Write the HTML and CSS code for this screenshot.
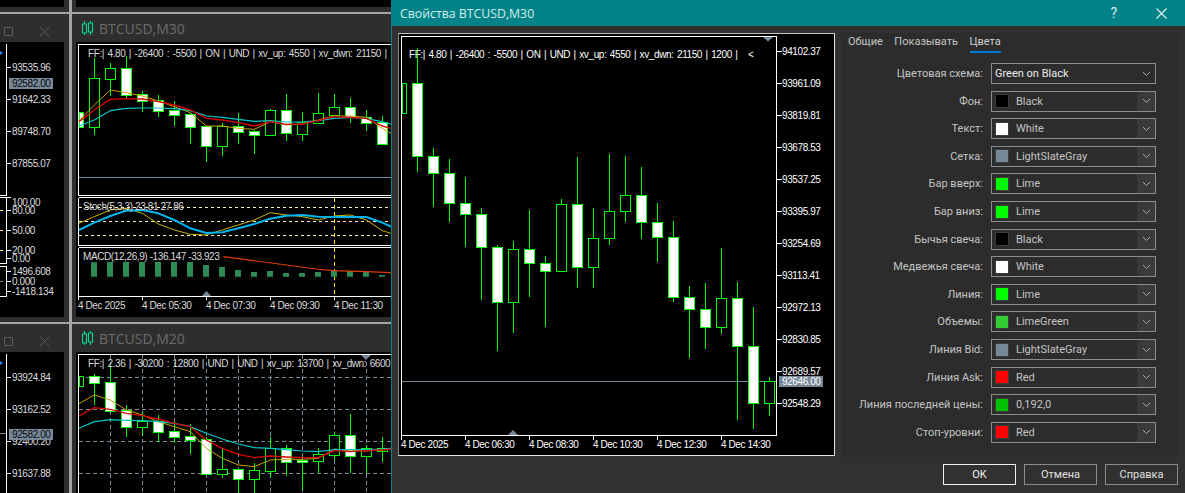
FILE: index.html
```html
<!DOCTYPE html>
<html lang="ru">
<head>
<meta charset="utf-8">
<title>Свойства BTCUSD,M30</title>
<link rel="stylesheet" href="styles.css">
</head>
<body>
<div class="desktop">
  <section class="win win-left win-top"><div class="strip"></div></section>
  <section class="win win-right win-top"><div class="strip"></div></section>

  <section class="win win-left">
    <header class="win-title">
      <svg class="ctl" width="50" height="10" viewBox="0 0 50 10"><path d="M4.5.5h8v8h-8zM40 0l9 9M49 0l-9 9"/></svg>
    </header>
    <svg class="chart" viewBox="0 42 64 275" width="64" height="275">
      <path class="wl" d="M6.5 44V195.500H0M0 197.500H6.500V263.500H0M0 266.500H6.500V296.500H0M6 67.500h5M6 99.500h5M6 131.500h5M6 163.500h5M6 197.500h5M6 210.500h5M6 230.500h5M6 250.500h5M6 258.500h5M6 271.500h5M6 281.500h5M6 291.500h5"/>
      <path class="yl" d="M0 210.500h3M0 230.500h3M0 250.500h3"/>
      <path class="gl" d="M0 281.500h3"/>
      <path class="mark" d="M0 51l3 2-3 2z"/>
      <text class="t" x="12" y="71">93535.96</text>
      <rect class="bid" x="9" y="78" width="44" height="11"/>
      <text class="t dk" x="12" y="87">92582.00</text>
      <text class="t" x="12" y="103">91642.33</text>
      <text class="t" x="12" y="135">89748.70</text>
      <text class="t" x="12" y="167">87855.07</text>
      <text class="t" x="12" y="206">100.00</text>
      <text class="t" x="12" y="214">80.00</text>
      <text class="t" x="12" y="234">50.00</text>
      <text class="t" x="12" y="254">20.00</text>
      <text class="t" x="12" y="262">0.00</text>
      <text class="t" x="12" y="275">1496.608</text>
      <text class="t" x="12" y="285">0.000</text>
      <text class="t" x="12" y="295">-1418.134</text>
    </svg>
  </section>

  <section class="win win-right">
    <header class="win-title">
      <svg class="cnd" width="12" height="14" viewBox="0 0 12 14"><path d="M2.500 0v3M2.500 12v2M8.500 0v2M8.500 11v3M.5 3h4v9h-4zM6.500 2h4v9h-4z"/></svg>
      <span>BTCUSD,M30</span>
    </header>
    <svg class="chart" viewBox="76 42 315 275" width="315" height="275">
      <path class="wl" d="M78.500 44H391M78.500 44V195.500H391M78.500 197.500H391M78.500 197.500V245.500H391M78.500 247.500H391M78.500 247.500V296.500H391M78.500 296V300M142.500 296V300M206.500 296V300M270.500 296V300M334.500 296V300"/>
      <path class="gl" d="M79 177.500H391"/>
      <path class="tri" d="M202 296l4.500-5 4.500 5z"/>
      <g class="cd">
        <path class="wick" d="M94.500 58V135M110.500 63V96M126.500 56V99M142.500 91V112M158.500 95V117M174.500 101V126M190.500 113V144M206.500 126V162M222.500 123V156M238.500 113V144M254.500 130V154M270.500 109V135M286.500 94V141M302.500 112V141M318.500 93V124M334.500 94V115M350.500 98V123M366.500 110V131M382.500 116V145"/>
        <path class="hollow" d="M89.500 78.500h10v49h-10zM105.500 68.500h10v11h-10zM217.500 126.500h10v20h-10zM265.500 110.500h10v25h-10zM297.500 122.500h10v12h-10zM313.500 113.500h10v10h-10zM329.500 107.500h10v8h-10z"/>
        <path class="solid" d="M79 112.500h4v15h-4zM121.500 68.500h10v27h-10zM137.500 94.500h10v7h-10zM153.500 100.500h10v11h-10zM169.500 110.500h10v5h-10zM185.500 114.500h10v13h-10zM201.500 126.500h10v20h-10zM233.500 126.500h10v6h-10zM249.500 131.500h10v4h-10zM281.500 110.500h10v23h-10zM345.500 107.500h10v10h-10zM361.500 117.500h10v6h-10zM377.500 122.500h10v22h-10z"/>
      </g>
      <g transform="scale(.3333)">
        <polyline class="ma-y" points="237,362 283,315 331,270 379,278 427,288 475,303 523,320 571,338 619,378 667,378 715,385 763,388 811,365 859,375 907,373 955,360 1003,348 1051,348 1099,352 1147,385 1173,400"/>
        <polyline class="ma-c" points="237,378 283,360 331,332 379,325 427,324 475,324 523,326 571,332 619,348 667,352 715,358 763,364 811,362 859,366 907,366 955,362 1003,355 1051,352 1099,356 1147,365 1173,372"/>
        <polyline class="ma-r" points="237,365 283,330 331,298 379,296 427,297 475,305 523,315 571,330 619,355 667,360 715,368 763,378 811,365 859,373 907,372 955,362 1003,350 1051,352 1099,355 1147,378 1173,385"/>
      </g>
      <text class="t hd" x="88" y="57">FF:| 4.80 | -26400 : -5500 | ON | UND | xv_up: 4550 | xv_dwn: 21150 |</text>
      <path class="lvl" d="M79 207.500H391M79 221.500H391M79 235.500H391"/>
      <path class="vd" d="M334.500 198V245M334.500 248V296"/>
      <g transform="scale(.3333)">
        <polyline class="st-y" points="237,670 283,650 331,630 379,625 427,640 475,672 523,690 571,703 619,705 667,690 715,675 763,660 811,638 859,645 907,650 955,660 1003,648 1051,645 1099,660 1147,692 1173,700"/>
        <polyline class="st-b" points="237,690 283,668 331,648 379,632 427,630 475,640 523,660 571,685 619,699 667,697 715,685 763,672 811,656 859,647 907,645 955,650 1003,651 1051,651 1099,651 1147,668 1173,680"/>
      </g>
      <text class="t" x="83" y="210">Stoch(5,3,3) 23.81 27.86</text>
      <g transform="translate(0 245) scale(.3333)">
        <path class="macd" d="M273 52h18v43h-18zM321 51h18v44h-18zM369 51h18v44h-18zM417 51h18v44h-18zM465 51h18v44h-18zM513 51h18v44h-18zM561 51h18v44h-18zM609 60h18v35h-18zM657 66h18v29h-18zM705 75h18v20h-18zM753 81h18v14h-18zM801 78h18v17h-18zM849 84h18v11h-18zM897 84h18v11h-18zM945 81h18v14h-18zM993 78h18v17h-18zM1041 78h18v17h-18zM1089 81h18v14h-18zM1137 90h18v5h-18z"/>
        <polyline class="sig" points="670,35 760,47 860,60 950,72 1000,77 1100,80 1173,83"/>
      </g>
      <text class="t" x="83" y="260">MACD(12,26,9) -136.147 -33.923</text>
      <text class="t" x="78" y="309">4 Dec 2025</text>
      <text class="t" x="142" y="309">4 Dec 05:30</text>
      <text class="t" x="206" y="309">4 Dec 07:30</text>
      <text class="t" x="270" y="309">4 Dec 09:30</text>
      <text class="t" x="334" y="309">4 Dec 11:30</text>
    </svg>
  </section>

  <section class="win win-left">
    <header class="win-title">
      <svg class="ctl" width="50" height="10" viewBox="0 0 50 10"><path d="M4.500.5h8v8h-8zM40 0l9 9M49 0l-9 9"/></svg>
    </header>
    <svg class="chart" viewBox="0 352 64 141" width="64" height="141">
      <path class="wl" d="M6.500 354V493M6 377.500h5M6 409.500h5M6 441.500h5M6 473.500h5"/>
      <path class="gl" d="M0 433.500h6"/>
      <path class="mark" d="M0 361l3 2-3 2z"/>
      <text class="t" x="12" y="381">93924.84</text>
      <text class="t" x="12" y="413">93162.52</text>
      <text class="t" x="12" y="445">92400.20</text>
      <rect class="bid" x="9" y="429" width="44" height="11"/>
      <text class="t dk" x="12" y="438">92582.00</text>
      <text class="t" x="12" y="477">91637.88</text>
    </svg>
  </section>

  <section class="win win-right">
    <header class="win-title">
      <svg class="cnd" width="12" height="14" viewBox="0 0 12 14"><path d="M2.500 0v3M2.500 12v2M8.500 0v2M8.500 11v3M.5 3h4v9h-4zM6.500 2h4v9h-4z"/></svg>
      <span>BTCUSD,M20</span>
    </header>
    <svg class="chart" viewBox="76 352 315 141" width="315" height="141">
      <path class="wl" d="M78.500 493V354.500H391"/>
      <path class="grid" d="M79 377.500H391M79 409.500H391M79 441.500H391M79 473.500H391M110.500 355V493M142.500 355V493M174.500 355V493M206.500 355V493M238.500 355V493M270.500 355V493M302.500 355V493M334.500 355V493M366.500 355V493"/>
      <path class="tri" d="M361 355h10l-5 5z"/>
      <g class="cd">
        <path class="wick" d="M94.500 374V405M110.500 366V412M126.500 405V437M142.500 412V436M158.500 415V442M174.500 422V443M190.500 424V454M206.500 437V475M222.500 448V478M238.500 469V493M254.500 463V493M270.500 437V477M286.500 445V476M302.500 458V490M318.500 448V473M334.500 432V460M350.500 414V473M366.500 445V473M382.500 437V462"/>
        <path class="hollow" d="M79 376.500h4v10h-4zM137.500 421.500h10v6h-10zM217.500 469.500h10v5h-10zM249.500 470.500h10v9h-10zM265.500 448.500h10v23h-10zM313.500 454.500h10v7h-10zM329.500 435.500h10v20h-10zM361.500 448.500h10v8h-10zM377.500 448.500h10v3h-10z"/>
        <path class="solid" d="M89.500 376.500h10v7h-10zM105.500 382.500h10v29h-10zM121.500 410.500h10v17h-10zM153.500 421.500h10v11h-10zM169.500 431.500h10v6h-10zM185.500 436.500h10v4h-10zM201.500 439.500h10v35h-10zM233.500 469.500h10v10h-10zM281.500 448.500h10v14h-10zM297.500 460.500h10v2h-10zM345.500 435.500h10v21h-10z"/>
      </g>
      <g transform="translate(0 245) scale(.3333)">
        <polyline class="ma-y" points="237,476 283,450 331,465 379,495 427,510 475,530 523,545 571,560 619,610 667,640 715,660 763,665 811,645 859,643 907,643 955,640 1003,612 1051,618 1099,618 1147,615 1173,612"/>
        <polyline class="ma-c" points="237,550 283,530 331,524 379,526 427,527 475,530 523,535 571,545 619,565 667,582 715,597 763,608 811,610 859,614 907,618 955,620 1003,614 1051,614 1099,614 1147,612 1173,610"/>
        <polyline class="ma-r" points="237,513 283,488 331,493 379,505 427,512 475,522 523,535 571,545 619,585 667,610 715,628 763,638 811,633 859,636 907,638 955,638 1003,617 1051,620 1099,617 1147,615 1173,612"/>
      </g>
      <text class="t hd" x="88" y="367">FF:| 2.36 | -30200 : 12800 | UND | UND | xv_up: 13700 | xv_dwn: 6600</text>
    </svg>
  </section>
</div>

<main class="dialog">
  <header class="dlg-title">
    <h1>Свойства BTCUSD,M30</h1>
    <span class="help">?</span>
    <svg class="close" width="11" height="11" viewBox="0 0 11 11"><path d="M.5.500l10 10M10.500.500l-10 10"/></svg>
  </header>
  <div class="dlg-main">
    <div class="frame">
      <svg class="chart" viewBox="399 34 435 421" width="435" height="421">
        <path class="wl" d="M401.500 36.500H776.500V435.500H401.500ZM401.500 435V440M465.500 435V440M529.500 435V440M593.500 435V440M657.500 435V440M721.500 435V440M777 51.500h5M777 83.500h5M777 115.500h5M777 147.500h5M777 179.500h5M777 211.500h5M777 243.500h5M777 275.500h5M777 307.500h5M777 339.500h5M777 371.500h5M777 403.500h5"/>
        <path class="tri" d="M763 37h10l-5 4.500z"/>
        <path class="tri" d="M508 435l5-5 5 5z"/>
        <g class="cd">
          <path class="wick" d="M417.500 48V172M433.500 148V207M449.500 159V222M465.500 177V247M481.500 208V300M497.500 245V351M513.500 241V333M529.500 210V297M545.500 256V327M561.500 199V272M577.500 157V288M593.500 208V288M609.500 154V245M625.500 156V222M641.500 167V239M657.500 203V262M673.500 221V302M689.500 286V358M705.500 283V349M721.500 248V334M737.500 282V420M753.500 307V429M769.500 377V416"/>
          <path class="gl" d="M402 381.500H776"/>
          <path class="hollow" d="M402 83.500h4v30h-4zM508.500 249.500h10v53h-10zM556.500 204.500h10v67h-10zM588.500 238.500h10v29h-10zM604.500 211.500h10v27h-10zM620.500 195.500h10v16h-10zM716.500 298.500h10v29h-10zM764.500 381.500h10v22h-10z"/>
          <path class="solid" d="M412.500 83.500h10v73h-10zM428.500 156.500h10v17h-10zM444.500 173.500h10v30h-10zM460.500 203.500h10v11h-10zM476.500 214.500h10v33h-10zM492.500 247.500h10v55h-10zM524.500 249.500h10v14h-10zM540.500 263.500h10v8h-10zM572.500 204.500h10v63h-10zM636.500 195.500h10v27h-10zM652.500 222.500h10v15h-10zM668.500 237.500h10v60h-10zM684.500 297.500h10v12h-10zM700.500 309.500h10v18h-10zM732.500 298.500h10v48h-10zM748.500 346.500h10v57h-10z"/>
        </g>
        <text class="t b hd" x="409" y="58">FF:| 4.80 | -26400 : -5500 | ON | UND | xv_up: 4550 | xv_dwn: 21150 | 1200 |   &lt;</text>
        <text class="t b" x="782" y="55">94102.37</text>
        <text class="t b" x="782" y="87">93961.09</text>
        <text class="t b" x="782" y="119">93819.81</text>
        <text class="t b" x="782" y="151">93678.53</text>
        <text class="t b" x="782" y="183">93537.25</text>
        <text class="t b" x="782" y="215">93395.97</text>
        <text class="t b" x="782" y="247">93254.69</text>
        <text class="t b" x="782" y="279">93113.41</text>
        <text class="t b" x="782" y="311">92972.13</text>
        <text class="t b" x="782" y="343">92830.85</text>
        <text class="t b" x="782" y="375">92689.57</text>
        <rect class="bid" x="779" y="376" width="44" height="11"/>
        <text class="t b" x="782" y="385">92646.00</text>
        <text class="t b" x="782" y="407">92548.29</text>
        <text class="t b" x="401" y="448">4 Dec 2025</text>
        <text class="t b" x="465" y="448">4 Dec 06:30</text>
        <text class="t b" x="529" y="448">4 Dec 08:30</text>
        <text class="t b" x="593" y="448">4 Dec 10:30</text>
        <text class="t b" x="657" y="448">4 Dec 12:30</text>
        <text class="t b" x="721" y="448">4 Dec 14:30</text>
      </svg>
    </div>
    <div class="panel">
      <nav class="tabs">
        <span>Общие</span>
        <span>Показывать</span>
        <span class="active">Цвета</span>
      </nav>
      <div class="form">
        <label>Цветовая схема:</label>
        <div class="combo plain"><span class="val">Green on Black</span><span class="arrow"><svg width="9" height="6" viewBox="0 0 9 6"><path d="M1 1l3.500 3.500L8 1"/></svg></span></div>
        <label>Фон:</label>
        <div class="combo"><i class="sw c-black"></i><span class="val">Black</span><span class="arrow"><svg width="9" height="6" viewBox="0 0 9 6"><path d="M1 1l3.500 3.500L8 1"/></svg></span></div>
        <label>Текст:</label>
        <div class="combo"><i class="sw c-white"></i><span class="val">White</span><span class="arrow"><svg width="9" height="6" viewBox="0 0 9 6"><path d="M1 1l3.500 3.500L8 1"/></svg></span></div>
        <label>Сетка:</label>
        <div class="combo"><i class="sw c-slate"></i><span class="val">LightSlateGray</span><span class="arrow"><svg width="9" height="6" viewBox="0 0 9 6"><path d="M1 1l3.500 3.500L8 1"/></svg></span></div>
        <label>Бар вверх:</label>
        <div class="combo"><i class="sw c-lime"></i><span class="val">Lime</span><span class="arrow"><svg width="9" height="6" viewBox="0 0 9 6"><path d="M1 1l3.500 3.500L8 1"/></svg></span></div>
        <label>Бар вниз:</label>
        <div class="combo"><i class="sw c-lime"></i><span class="val">Lime</span><span class="arrow"><svg width="9" height="6" viewBox="0 0 9 6"><path d="M1 1l3.500 3.500L8 1"/></svg></span></div>
        <label>Бычья свеча:</label>
        <div class="combo"><i class="sw c-black"></i><span class="val">Black</span><span class="arrow"><svg width="9" height="6" viewBox="0 0 9 6"><path d="M1 1l3.500 3.500L8 1"/></svg></span></div>
        <label>Медвежья свеча:</label>
        <div class="combo"><i class="sw c-white"></i><span class="val">White</span><span class="arrow"><svg width="9" height="6" viewBox="0 0 9 6"><path d="M1 1l3.500 3.500L8 1"/></svg></span></div>
        <label>Линия:</label>
        <div class="combo"><i class="sw c-lime"></i><span class="val">Lime</span><span class="arrow"><svg width="9" height="6" viewBox="0 0 9 6"><path d="M1 1l3.500 3.500L8 1"/></svg></span></div>
        <label>Объемы:</label>
        <div class="combo"><i class="sw c-limegreen"></i><span class="val">LimeGreen</span><span class="arrow"><svg width="9" height="6" viewBox="0 0 9 6"><path d="M1 1l3.500 3.500L8 1"/></svg></span></div>
        <label>Линия Bid:</label>
        <div class="combo"><i class="sw c-slate"></i><span class="val">LightSlateGray</span><span class="arrow"><svg width="9" height="6" viewBox="0 0 9 6"><path d="M1 1l3.500 3.500L8 1"/></svg></span></div>
        <label>Линия Ask:</label>
        <div class="combo"><i class="sw c-red"></i><span class="val">Red</span><span class="arrow"><svg width="9" height="6" viewBox="0 0 9 6"><path d="M1 1l3.500 3.500L8 1"/></svg></span></div>
        <label>Линия последней цены:</label>
        <div class="combo"><i class="sw c-192"></i><span class="val">0,192,0</span><span class="arrow"><svg width="9" height="6" viewBox="0 0 9 6"><path d="M1 1l3.500 3.500L8 1"/></svg></span></div>
        <label>Стоп-уровни:</label>
        <div class="combo"><i class="sw c-red"></i><span class="val">Red</span><span class="arrow"><svg width="9" height="6" viewBox="0 0 9 6"><path d="M1 1l3.500 3.500L8 1"/></svg></span></div>
      </div>
    </div>
  </div>
  <footer class="dlg-foot">
    <button class="btn default">OK</button>
    <button class="btn">Отмена</button>
    <button class="btn">Справка</button>
  </footer>
</main>
</body>
</html>
```
FILE: styles.css
```css
* { box-sizing: border-box; }
html, body { height: 100%; }
body {
  margin: 0;
  width: 1185px;
  height: 493px;
  overflow: hidden;
  display: flex;
  background: #2d2d2d;
  font-family: Roboto, "Noto Sans", sans-serif;
}

/* MDI desktop with chart windows */
.desktop {
  width: 391px;
  height: 493px;
  flex: none;
  display: grid;
  grid-template-columns: 69px 319px;
  grid-template-rows: 12px 308px 169px;
  gap: 2px 3px;
  background: #a3a3a3;
  overflow: hidden;
}
.win { background: #2e2e2e; overflow: hidden; display: flex; flex-direction: column; }
.win-left { padding-right: 5px; }
.win-right { padding-left: 4px; }
.strip { height: 7px; background: #000; flex: none; }
.win-title {
  height: 28px;
  flex: none;
  display: flex;
  align-items: center;
  gap: 5px;
  color: #6c6c6c;
  font-family: "Open Sans", sans-serif;
  font-size: 14px;
  padding-left: 6px;
}
.win-left .win-title { padding-left: 0; }
.ctl { fill: none; stroke: #5c5c5c; stroke-width: 1; margin-top: 7px; }
.cnd { fill: none; stroke: #00dc8c; stroke-width: 1.100; flex: none; }
.chart { display: block; background: #000; flex: none; }

/* chart drawing */
.t {
  font-family: "Liberation Sans", Arial, sans-serif;
  font-size: 10px;
  letter-spacing: -.4px;
  fill: #dcdcdc;
  white-space: pre;
}
.t.hd { word-spacing: 1.100px; }
.t.b { fill: #fff; }
.t.dk { fill: #0a0a0a; }
.bid { fill: #778899; }
.wl { fill: none; stroke: #fff; stroke-width: 1; shape-rendering: crispEdges; }
.gl { fill: none; stroke: #778899; stroke-width: 1; shape-rendering: crispEdges; }
.yl { fill: none; stroke: #ffe060; stroke-width: 1; }
.mark { fill: #1e90ff; }
.tri { fill: #778899; }
.grid { fill: none; stroke: #778899; stroke-width: 1; stroke-dasharray: 4 3; shape-rendering: crispEdges; }
.cd { shape-rendering: crispEdges; }
.wick { fill: none; stroke: #0f0; stroke-width: 1; }
.hollow { fill: #000; stroke: #0f0; stroke-width: 1; }
.solid { fill: #fff; stroke: #0f0; stroke-width: 1; }
polyline { fill: none; stroke-linejoin: round; }
.ma-y { stroke: #c8a400; stroke-width: 3; }
.ma-r { stroke: #d80000; stroke-width: 4; }
.ma-c { stroke: #00c8c8; stroke-width: 3.500; }
.lvl { fill: none; stroke: #fff4c0; stroke-width: 1; stroke-dasharray: 3 3; shape-rendering: crispEdges; }
.vd { fill: none; stroke: #ffe600; stroke-width: 1; stroke-dasharray: 4 3; shape-rendering: crispEdges; }
.st-y { stroke: #c8b400; stroke-width: 3; }
.st-b { stroke: #00b4f0; stroke-width: 6; }
.macd { fill: #2e8b57; }
.sig { stroke: #e03c00; stroke-width: 3.500; }

/* dialog */
.dialog {
  flex: 1;
  height: 493px;
  min-width: 0;
  display: flex;
  flex-direction: column;
  background: #313131;
  border-left: 1px solid #038387;
}
.dlg-title {
  height: 26px;
  flex: none;
  margin-left: -1px;
  background: #038387;
  color: #d6eeee;
  display: flex;
  align-items: center;
  padding: 0 18px 0 9px;
}
.dlg-title h1 { font-family: "Open Sans", sans-serif; font-size: 12.300px; font-weight: 400; margin: 0; flex: 1; }
.help { font-size: 14px; margin-right: 39px; }
.close { fill: none; stroke: #e8f4f4; stroke-width: 1.100; }
.dlg-main { height: 431px; flex: none; display: flex; padding-top: 7px; }
.frame {
  width: 437px;
  height: 423px;
  margin-left: 6px;
  flex: none;
  border: 1px solid #e6e6e6;
  border-color: #c4c4c4 #e6e6e6 #e6e6e6 #8a8a8a;
  background: #000;
}
.panel {
  width: 338px;
  margin-left: 6px;
  flex: none;
  background: #2c2c2c;
  color: #c4c4c4;
  font-size: 11px;
}
.tabs { display: flex; gap: 11.500px; padding-left: 7px; height: 20px; align-items: stretch; }
.tabs span { line-height: 18px; height: 20px; border-bottom: 2px solid transparent; }
.tabs .active { border-bottom-color: #0078d4; color: #d0d0d0; }
.form {
  display: grid;
  grid-template-columns: 1fr 165px;
  column-gap: 8px;
  row-gap: 6.620px;
  margin-top: 10px;
  padding-right: 23px;
  align-items: center;
}
.form label { text-align: right; white-space: nowrap; }
.combo {
  height: 21px;
  display: flex;
  align-items: center;
  border: 1px solid #8c8c8c;
  background: #2c2c2c;
  padding-left: 3px;
}
.val { margin-left: 7px; }
.plain .val { margin-left: 0; color: #ececec; }
.sw { width: 14px; height: 14px; border: 1px solid #3c3c3c; flex: none; }
.c-black { background: #000; }
.c-white { background: #fff; }
.c-slate { background: #778899; }
.c-lime { background: #0f0; }
.c-limegreen { background: #32cd32; }
.c-red { background: #f00; }
.c-192 { background: #00c000; }
.arrow {
  margin-left: auto;
  align-self: stretch;
  width: 18px;
  background: #3a3a3a;
  display: flex;
  align-items: center;
  justify-content: center;
}
.plain .arrow { background: none; }
.arrow svg { fill: none; stroke: #a8a8a8; stroke-width: 1; }
.dlg-foot { display: flex; justify-content: flex-end; gap: 8px; padding: 7px 7px 0 0; }
.btn {
  width: 73px;
  height: 21px;
  padding: 0;
  background: #313131;
  border: 1px solid #8c8c8c;
  color: #e0e0e0;
  font: 11px Roboto, "Noto Sans", sans-serif;
}
.btn.default { border-color: #efefef; color: #f0f0f0; }
```
